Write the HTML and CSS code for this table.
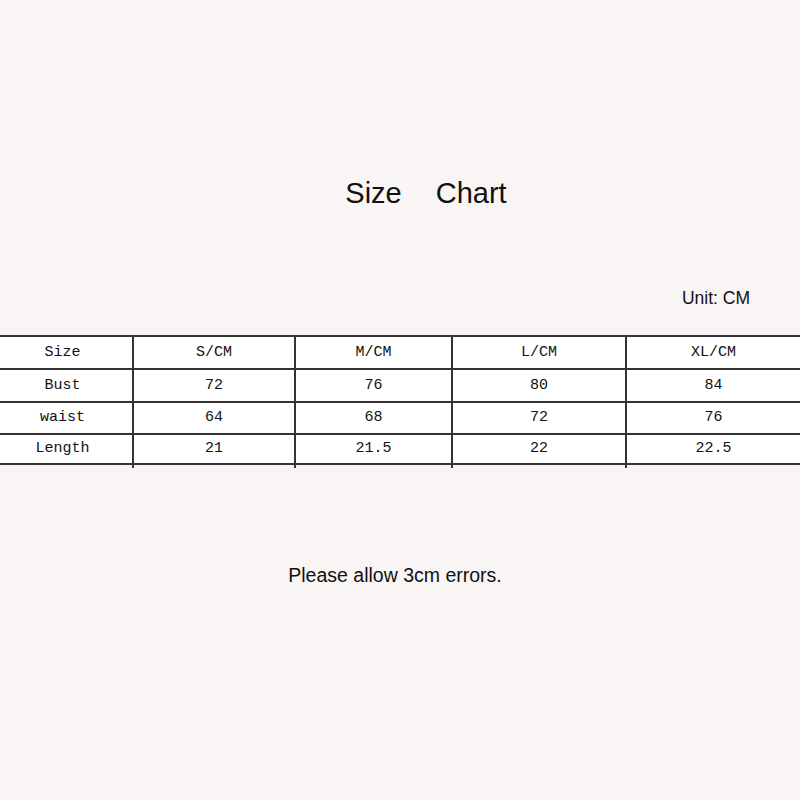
FILE: index.html
```html
<!DOCTYPE html>
<html>
<head>
<meta charset="utf-8">
<link rel="stylesheet" href="styles.css">
</head>
<body>
<div class="page">
  <h1 class="title"><span>Size</span><span>Chart</span></h1>
  <div class="unit">Unit: CM</div>
  <table class="chart">
    <colgroup>
      <col class="c1"><col class="c2"><col class="c3"><col class="c4"><col class="c5">
    </colgroup>
    <tbody>
      <tr class="r1"><td>Size</td><td>S/CM</td><td>M/CM</td><td>L/CM</td><td>XL/CM</td></tr>
      <tr class="r2"><td>Bust</td><td>72</td><td>76</td><td>80</td><td>84</td></tr>
      <tr class="r3"><td>waist</td><td>64</td><td>68</td><td>72</td><td>76</td></tr>
      <tr class="r4"><td>Length</td><td>21</td><td>21.5</td><td>22</td><td>22.5</td></tr>
      <tr class="tail"><td></td><td></td><td></td><td></td><td></td></tr>
    </tbody>
  </table>
  <p class="note">Please allow 3cm errors.</p>
</div>
</body>
</html>
```

FILE: styles.css
```css
html, body {
  margin: 0;
  padding: 0;
  background: #f9f5f5;
}
.page {
  width: 800px;
  height: 800px;
  padding-top: 176px;
  box-sizing: border-box;
  font-family: "Liberation Sans", Arial, sans-serif;
  color: #111;
}
.title {
  margin: 0;
  display: flex;
  justify-content: center;
  gap: 34px;
  padding-left: 52px;
  font-size: 29px;
  font-weight: normal;
  line-height: 34px;
  height: 34px;
}
.unit {
  margin-top: 78px;
  text-align: right;
  padding-right: 50px;
  font-size: 17.5px;
  line-height: 20px;
  height: 20px;
}
.chart {
  margin-top: 27px;
  width: 800px;
  table-layout: fixed;
  border-collapse: separate;
  border-spacing: 0;
  background: #fff;
  font-family: "Liberation Mono", "Courier New", monospace;
  font-size: 15px;
  color: #111;
}
.c1 { width: 132px; }
.c2 { width: 162px; }
.c3 { width: 157px; }
.c4 { width: 174px; }
.c5 { width: 175px; }
.chart td {
  padding: 0;
  text-align: center;
  vertical-align: middle;
  border-top: 2px solid #333;
  box-sizing: border-box;
  line-height: 16px;
}
.chart td:first-child {
  padding-right: 7px;
}
.chart td + td {
  border-left: 2px solid #333;
}
.r1 td { height: 33px; }
.r2 td { height: 33px; }
.r3 td { height: 32px; }
.r4 td { height: 32px; border-bottom: 2px solid #333; }
.chart .tail td {
  height: 3px;
  border-top: none;
  line-height: 0;
  background: #f9f5f5;
}
.chart .tail td + td {
  border-left: 2px solid #333;
}
.note {
  margin: 96px 0 0;
  text-align: center;
  padding-right: 10px;
  font-size: 19.5px;
  line-height: 22px;
}
```
